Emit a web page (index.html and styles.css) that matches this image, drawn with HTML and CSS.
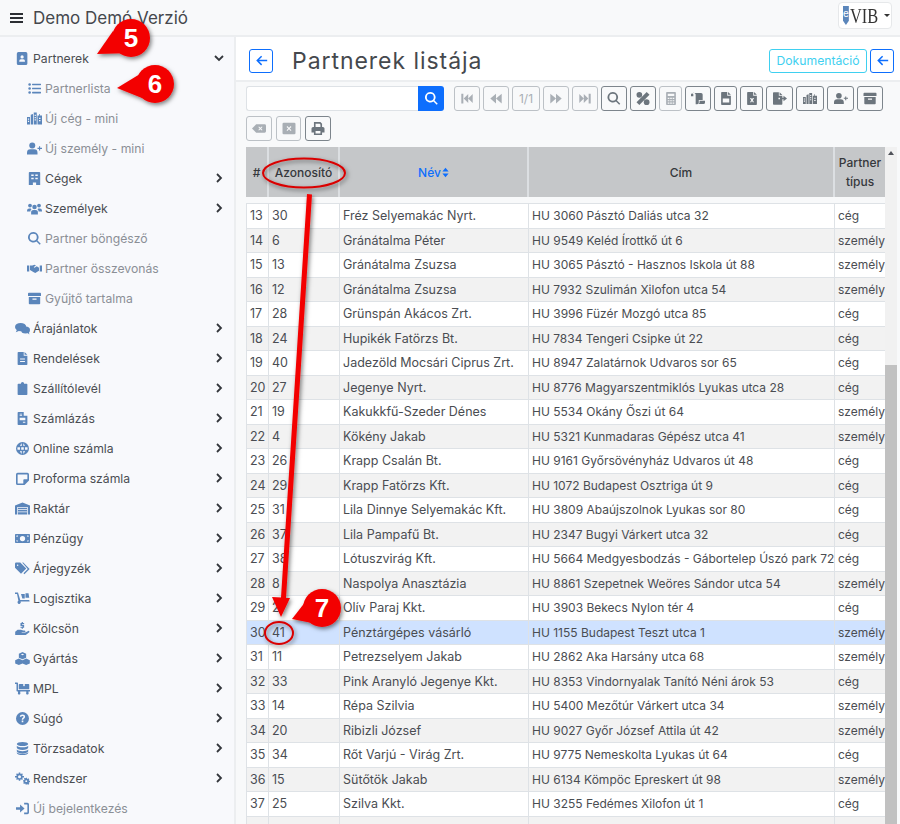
FILE: index.html
```html
<!DOCTYPE html>
<html lang="hu">
<head>
    <meta charset="UTF-8">
    <meta name="viewport" content="width=device-width, initial-scale=1.0">
    <title>Partnerek listája</title>
    <link rel="stylesheet" href="styles.css">
</head>
<body>
    <svg class="icon-defs" width="0" height="0">
        <symbol id="i-addr" viewBox="0 0 16 16"><path fill-rule="evenodd" d="M3 0h9a2 2 0 0 1 2 2v12a2 2 0 0 1-2 2H3a2 2 0 0 1-2-2V2a2 2 0 0 1 2-2zm4.500 4a2 2 0 1 0 0 4 2 2 0 0 0 0-4zM4 12h7V11a2 2 0 0 0-2-2H6a2 2 0 0 0-2 2z"/></symbol>
        <symbol id="i-list" viewBox="0 0 16 16"><circle cx="2" cy="3" r="1.600"/><circle cx="2" cy="8" r="1.600"/><circle cx="2" cy="13" r="1.600"/><rect x="5" y="2" width="11" height="2" rx=".5"/><rect x="5" y="7" width="11" height="2" rx=".5"/><rect x="5" y="12" width="11" height="2" rx=".5"/></symbol>
        <symbol id="i-city" viewBox="0 0 20 16"><path fill-rule="evenodd" d="M0 6h4v10H0zM5 3l3-1v14H5zM9 0h4v16H9zM14 4h2V2h1v2h3v12h-6zM1.200 8v1.500h1.600V8zm0 3v1.500h1.600V11zM10.200 3v1.500h1.600V3zm0 3v1.500h1.600V6zm0 3v1.500h1.600V9zM16 7v1.500h2V7zm0 3v1.500h2V10z"/></symbol>
        <symbol id="i-uplus" viewBox="0 0 20 16"><circle cx="7" cy="4" r="4"/><path d="M0 16v-2.500A4.500 4.500 0 0 1 4.500 9h5a4.500 4.500 0 0 1 4.500 4.500V16zM16 5h1.500v2H20v1.500h-2.500v2H16v-2h-2V7h2z"/></symbol>
        <symbol id="i-bld" viewBox="0 0 14 16"><path fill-rule="evenodd" d="M1 0h12a1 1 0 0 1 1 1v15H9v-3H5v3H0V1a1 1 0 0 1 1-1zm2 3v2h3V3zm5 0v2h3V3zM3 7v2h3V7zm5 0v2h3V7z"/></symbol>
        <symbol id="i-users" viewBox="0 0 20 16"><circle cx="4" cy="4" r="2.500"/><circle cx="16" cy="4" r="2.500"/><circle cx="10" cy="6" r="3"/><path d="M0 11a3 3 0 0 1 3-3h2l1 1a4 4 0 0 0-1.500 3H0zM15 8h2a3 3 0 0 1 3 3v1h-4.500A4 4 0 0 0 14 9zM5.500 14a3.500 3.500 0 0 1 3.500-4h2a3.500 3.500 0 0 1 3.500 4v2h-9z"/></symbol>
        <symbol id="i-search" viewBox="0 0 16 16"><path fill-rule="evenodd" d="M6.500 0a6.500 6.500 0 0 1 5.200 10.400l4 4-1.300 1.300-4-4A6.500 6.500 0 1 1 6.500 0zm0 2.200a4.300 4.300 0 1 0 0 8.600 4.300 4.300 0 0 0 0-8.600z"/></symbol>
        <symbol id="i-hands" viewBox="0 0 20 16"><path d="M0 4h3v8H0zM17 4h3v8h-3zM4 4h3l3-1 2 1-3 2 1 1 3-2 3 2v4l-5 3-2-1-5-3z"/></symbol>
        <symbol id="i-arch" viewBox="0 0 16 16"><path fill-rule="evenodd" d="M1 1h14a1 1 0 0 1 1 1v3H0V2a1 1 0 0 1 1-1zM1 6h14v8a1 1 0 0 1-1 1H2a1 1 0 0 1-1-1zm4.500 2v1.500h5V8z"/></symbol>
        <symbol id="i-comm" viewBox="0 0 20 16"><ellipse cx="7.500" cy="6" rx="7.500" ry="5.500"/><ellipse cx="14" cy="10" rx="6" ry="4.800"/><path d="M3 9l-2 4 5-2zM16 13l3 3-.5-5z"/></symbol>
        <symbol id="i-file" viewBox="0 0 12 16"><path fill-rule="evenodd" d="M1 0h6.500v4.500H12V15a1 1 0 0 1-1 1H1a1 1 0 0 1-1-1V1a1 1 0 0 1 1-1zm7.500 0L12 3.500H8.500zM3 8v1.200h6V8zm0 3v1.200h6V11z"/></symbol>
        <symbol id="i-clip" viewBox="0 0 12 16"><path d="M4 2a2 2 0 0 1 4 0h3a1 1 0 0 1 1 1v12a1 1 0 0 1-1 1H1a1 1 0 0 1-1-1V3a1 1 0 0 1 1-1z"/></symbol>
        <symbol id="i-inv" viewBox="0 0 12 16"><path fill-rule="evenodd" d="M1 0h6.500v4.500H12V15a1 1 0 0 1-1 1H1a1 1 0 0 1-1-1V1a1 1 0 0 1 1-1zm1.500 2v1h3V2zm0 2v1h3V4zm0 3v3h7V7zm4 5v1.300h3V12z"/></symbol>
        <symbol id="i-globe" viewBox="0 0 16 16"><path fill-rule="evenodd" d="M8 0a8 8 0 1 1 0 16A8 8 0 0 1 8 0zM7 1.500C5.800 2.500 5.300 4 5.100 5h2V1.500zm2 0V5h1.900C10.700 4 10.200 2.500 9 1.500zM1.900 6.500A6 6 0 0 0 1.900 9.500H4.900V6.500zm4.500 0v3h3.200v-3zm4.700 0v3h3a6 6 0 0 0 0-3zM5.100 11c.2 1 .7 2.500 1.900 3.500V11zm3.900 0v3.500c1.200-1 1.700-2.500 1.900-3.500z"/></symbol>
        <symbol id="i-note" viewBox="0 0 16 16"><path fill-rule="evenodd" d="M2 1h12a2 2 0 0 1 2 2v7.500L10.500 16H2a2 2 0 0 1-2-2V3a2 2 0 0 1 2-2zm0 2v11h7v-4a1 1 0 0 1 1-1h4V3z"/></symbol>
        <symbol id="i-ware" viewBox="0 0 20 16"><path fill-rule="evenodd" d="M10 0l10 4v12h-3V6H3v10H0V4zM4 7h12v2H4zm0 3h12v2H4zm0 3h12v3H4z"/></symbol>
        <symbol id="i-money" viewBox="0 0 20 16"><path fill-rule="evenodd" d="M1 2h18a1 1 0 0 1 1 1v10a1 1 0 0 1-1 1H1a1 1 0 0 1-1-1V3a1 1 0 0 1 1-1zm9 2.500a3.500 3.500 0 1 0 0 7 3.500 3.500 0 0 0 0-7zM2 4v2a2 2 0 0 0 2-2zm14 0a2 2 0 0 0 2 2V4zM2 10v2h2a2 2 0 0 0-2-2zm16 0a2 2 0 0 0-2 2h2z"/></symbol>
        <symbol id="i-tags" viewBox="0 0 20 16"><path fill-rule="evenodd" d="M0 1.500A1.500 1.500 0 0 1 1.500 0H7l8 8-7 7-8-8zM3.500 2.500a1 1 0 1 0 0 2 1 1 0 0 0 0-2z"/><path d="M9.500 0H11l8.500 8.500-7 7-1.200-1.200L17 8.500z"/></symbol>
        <symbol id="i-dolly" viewBox="0 0 20 16"><path d="M0 0h4l3 10h12l.5 2H7.500a2.200 2.200 0 1 1-3-1L2.700 2H0zM8 2h5v6H9.800zM14 1h4l1 6h-5z"/></symbol>
        <symbol id="i-hand" viewBox="0 0 18 16"><path d="M8 0h1.500v1.200H11v1.300H8.500v.8H11V7H9.500v1.200H8V7H6.500V5.700H9v-.9H6.500V1.200H8zM0 12l3-2.500h4l3 1h1.500a1 1 0 0 1 0 2.200H8v.5h4l4-2.200a1.100 1.100 0 0 1 1.400 1.600L13 16H0z"/></symbol>
        <symbol id="i-cubes" viewBox="0 0 18 16"><path fill-rule="evenodd" d="M9 0l4.500 2v5L9 9 4.500 7V2zM4.500 8L9 10v4l-4.500 2L0 14v-4zM13.500 8L18 10v4l-4.500 2L9 14v-4zM9 2L7 3l2 1 2-1z"/></symbol>
        <symbol id="i-flat" viewBox="0 0 20 16"><path d="M0 0h3a1 1 0 0 1 1 1v9h16v2h-2v1.500a1.700 1.700 0 1 1-3 0V12H7v1.500a1.700 1.700 0 1 1-3 0V12H3a1 1 0 0 1-1-1V2H0zM6 2h5v3l1-.5 1 .5V2h5a1 1 0 0 1 1 1v6H5V3a1 1 0 0 1 1-1z"/></symbol>
        <symbol id="i-quest" viewBox="0 0 16 16"><path fill-rule="evenodd" d="M8 0a8 8 0 1 1 0 16A8 8 0 0 1 8 0zm0 3.200c-2 0-3 1-3.300 2.300l1.600.6C6.600 5.300 7 4.900 8 4.900c.8 0 1.300.4 1.300 1 0 1.100-2.200 1.200-2.200 3.300v.4h1.800v-.3c0-1.200 2.300-1.500 2.300-3.500 0-1.500-1.300-2.600-3.200-2.600zM7 10.500v2h2v-2z"/></symbol>
        <symbol id="i-db" viewBox="0 0 14 16"><ellipse cx="7" cy="2.500" rx="7" ry="2.500"/><path d="M0 4.500C1 6 4 6.500 7 6.500s6-.5 7-2V7c0 1.500-3 2.700-7 2.700S0 8.500 0 7zM0 9.300c1 1.500 4 2 7 2s6-.5 7-2v2.200c0 1.500-3 2.500-7 2.500s-7-1-7-2.500zM0 12.500c1 1.500 4 2 7 2s6-.5 7-2v1c0 1.500-3 2.500-7 2.500s-7-1-7-2.500z"/></symbol>
        <symbol id="i-cogs" viewBox="0 0 20 16"><path fill-rule="evenodd" d="M5 0h2v1.300l1.300.6 1-1 1.300 1.300-1 1 .6 1.300H12v2h-1.800l-.6 1.300 1 1-1.300 1.300-1-1L7 9.700V11H5V9.700l-1.300-.6-1 1L1.400 8.800l1-1L1.800 6.500H0v-2h1.800l.6-1.300-1-1L2.700.9l1 1L5 1.300zm1 3.500a2 2 0 1 0 0 4 2 2 0 0 0 0-4zM14 7h2v1l1 .5.900-.7 1.200 1.200-.7.900.4 1.100H20v2h-1.200l-.4 1.100.7.900-1.200 1.200-.9-.7-1 .5V16h-2v-.9l-1-.5-.9.7-1.200-1.200.7-.9-.4-1.200H11v-2h1.200l.4-1 -.7-.9 1.200-1.200.9.7 1-.5zm1 3.200a1.300 1.300 0 1 0 0 2.600 1.300 1.300 0 0 0 0-2.600z"/></symbol>
        <symbol id="i-signin" viewBox="0 0 16 16"><path d="M0 6.500h5V3l5.500 5L5 13V9.500H0zM10 1h4a2 2 0 0 1 2 2v10a2 2 0 0 1-2 2h-4v-2h3.500a.5.500 0 0 0 .5-.5v-9a.5.500 0 0 0-.5-.5H10z"/></symbol>
        <symbol id="i-first" viewBox="0 0 16 16"><path d="M1 2h2.500v12H1zM4 8l5.500-5.500V8l5.500-5.500v11L9.500 8v5.500z"/></symbol>
        <symbol id="i-back" viewBox="0 0 16 16"><path d="M1 8l7-6v6l7-6v12L8 8v6z"/></symbol>
        <symbol id="i-fwd" viewBox="0 0 16 16"><path d="M15 8L8 2v6L1 2v12l7-6v6z"/></symbol>
        <symbol id="i-last" viewBox="0 0 16 16"><path d="M15 2h-2.500v12H15zM12 8L6.500 2.500V8L1 2.500v11L6.500 8v5.500z"/></symbol>
        <symbol id="i-pct" viewBox="0 0 16 16"><path d="M12.500 0L16 3.500 3.500 16 0 12.500z"/><circle cx="3.500" cy="3.500" r="3.500"/><circle cx="12.500" cy="12.500" r="3.500"/></symbol>
        <symbol id="i-calc" viewBox="0 0 12 16"><path fill-rule="evenodd" d="M1 0h10a1 1 0 0 1 1 1v14a1 1 0 0 1-1 1H1a1 1 0 0 1-1-1V1a1 1 0 0 1 1-1zm1 2v3h8V2zm0 5v1.500h2V7zm3 0v1.500h2V7zm3 0v1.500h2V7zM2 10v1.500h2V10zm3 0v1.500h2V10zm3 0v1.500h2V10zM2 13v1.500h2V13zm3 0v1.500h2V13zm3 0v1.500h2V13z"/></symbol>
        <symbol id="i-scroll" viewBox="0 0 18 16"><path d="M2.500 1H13a2 2 0 0 1 2 2v7h-5v3a2.500 2.500 0 0 1-2 2.500H6V3.500A2.500 2.500 0 0 0 2.500 1zM0 3a1.500 1.500 0 0 1 3 0v2H0zM11 11h7v2a2 2 0 0 1-2 2H9.500A3 3 0 0 0 11 13z"/></symbol>
        <symbol id="i-csv" viewBox="0 0 12 16"><path fill-rule="evenodd" d="M1 0h6.500v4.500H12V15a1 1 0 0 1-1 1H1a1 1 0 0 1-1-1V1a1 1 0 0 1 1-1zm7.500 0L12 3.500H8.500zM2 8v5h8V8z"/></symbol>
        <symbol id="i-xls" viewBox="0 0 12 16"><path fill-rule="evenodd" d="M1 0h6.500v4.500H12V15a1 1 0 0 1-1 1H1a1 1 0 0 1-1-1V1a1 1 0 0 1 1-1zm7.500 0L12 3.500H8.500zM3.500 7.500L5 10l-1.500 2.500h1.600L6 11l.9 1.500h1.600L7 10l1.500-2.500H6.900L6 9l-.9-1.500z"/></symbol>
        <symbol id="i-exp" viewBox="0 0 18 16"><path d="M1 0h6.500v4.500H12V7H7v2h5v6a1 1 0 0 1-1 1H1a1 1 0 0 1-1-1V1a1 1 0 0 1 1-1zM8.500 0L12 3.500H8.500zM13.500 4.500L18 8l-4.500 3.500V9H9V7h4.500z"/></symbol>
        <symbol id="i-bksp" viewBox="0 0 20 16"><path fill-rule="evenodd" d="M6 2h12a2 2 0 0 1 2 2v8a2 2 0 0 1-2 2H6L0 8zm4 3L9 6l2 2-2 2 1 1 2-2 2 2 1-1-2-2 2-2-1-1-2 2z"/></symbol>
        <symbol id="i-wclose" viewBox="0 0 16 16"><path fill-rule="evenodd" d="M1.500 1h13A1.500 1.500 0 0 1 16 2.500v11a1.500 1.500 0 0 1-1.500 1.500h-13A1.500 1.500 0 0 1 0 13.500v-11A1.500 1.500 0 0 1 1.500 1zM6 5L5 6l2 2-2 2 1 1 2-2 2 2 1-1-2-2 2-2-1-1-2 2z"/></symbol>
        <symbol id="i-print" viewBox="0 0 16 16"><path fill-rule="evenodd" d="M3 0h8l2 2v4h1a2 2 0 0 1 2 2v5h-3v3H3v-3H0V8a2 2 0 0 1 2-2h1zm2 2v4h6V3l-1-1zm0 9v3h6v-3z"/></symbol>
        <symbol id="i-left" viewBox="0 0 16 16"><path d="M7.500 2l1.300 1.300L5 7h10v2H5l3.800 3.700L7.500 14 1.500 8z"/></symbol>
        <symbol id="i-sort" viewBox="0 0 10 16"><path d="M5 1l4.500 5.500h-9zM5 15L.5 9.500h9z"/></symbol>
    </svg>

    <header class="topbar">
        <div class="burger"><span></span><span></span><span></span></div>
        <div class="brand">Demo Demó Verzió</div>
        <div class="logo-btn">
            <span class="logo-e">e</span>
            <span class="logo-vib">VIB</span>
            <span class="caret"></span>
        </div>
    </header>

    <div class="layout">
        <nav class="sidebar">
            <a class="nav-item"><svg class="ico"><use href="#i-addr"/></svg><span>Partnerek</span><svg class="chev" viewBox="0 0 12 12"><path d="M2 4l4 4 4-4"/></svg></a>
            <a class="nav-item sub leaf"><svg class="ico"><use href="#i-list"/></svg><span>Partnerlista</span></a>
            <a class="nav-item sub leaf"><svg class="ico"><use href="#i-city"/></svg><span>Új cég - mini</span></a>
            <a class="nav-item sub leaf"><svg class="ico"><use href="#i-uplus"/></svg><span>Új személy - mini</span></a>
            <a class="nav-item sub"><svg class="ico"><use href="#i-bld"/></svg><span>Cégek</span><svg class="chev" viewBox="0 0 12 12"><path d="M4 2l4 4-4 4"/></svg></a>
            <a class="nav-item sub"><svg class="ico"><use href="#i-users"/></svg><span>Személyek</span><svg class="chev" viewBox="0 0 12 12"><path d="M4 2l4 4-4 4"/></svg></a>
            <a class="nav-item sub leaf"><svg class="ico"><use href="#i-search"/></svg><span>Partner böngésző</span></a>
            <a class="nav-item sub leaf"><svg class="ico"><use href="#i-hands"/></svg><span>Partner összevonás</span></a>
            <a class="nav-item sub leaf"><svg class="ico"><use href="#i-arch"/></svg><span>Gyűjtő tartalma</span></a>
            <a class="nav-item"><svg class="ico"><use href="#i-comm"/></svg><span>Árajánlatok</span><svg class="chev" viewBox="0 0 12 12"><path d="M4 2l4 4-4 4"/></svg></a>
            <a class="nav-item"><svg class="ico"><use href="#i-file"/></svg><span>Rendelések</span><svg class="chev" viewBox="0 0 12 12"><path d="M4 2l4 4-4 4"/></svg></a>
            <a class="nav-item"><svg class="ico"><use href="#i-clip"/></svg><span>Szállítólevél</span><svg class="chev" viewBox="0 0 12 12"><path d="M4 2l4 4-4 4"/></svg></a>
            <a class="nav-item"><svg class="ico"><use href="#i-inv"/></svg><span>Számlázás</span><svg class="chev" viewBox="0 0 12 12"><path d="M4 2l4 4-4 4"/></svg></a>
            <a class="nav-item"><svg class="ico"><use href="#i-globe"/></svg><span>Online számla</span><svg class="chev" viewBox="0 0 12 12"><path d="M4 2l4 4-4 4"/></svg></a>
            <a class="nav-item"><svg class="ico"><use href="#i-note"/></svg><span>Proforma számla</span><svg class="chev" viewBox="0 0 12 12"><path d="M4 2l4 4-4 4"/></svg></a>
            <a class="nav-item"><svg class="ico"><use href="#i-ware"/></svg><span>Raktár</span><svg class="chev" viewBox="0 0 12 12"><path d="M4 2l4 4-4 4"/></svg></a>
            <a class="nav-item"><svg class="ico"><use href="#i-money"/></svg><span>Pénzügy</span><svg class="chev" viewBox="0 0 12 12"><path d="M4 2l4 4-4 4"/></svg></a>
            <a class="nav-item"><svg class="ico"><use href="#i-tags"/></svg><span>Árjegyzék</span><svg class="chev" viewBox="0 0 12 12"><path d="M4 2l4 4-4 4"/></svg></a>
            <a class="nav-item"><svg class="ico"><use href="#i-dolly"/></svg><span>Logisztika</span><svg class="chev" viewBox="0 0 12 12"><path d="M4 2l4 4-4 4"/></svg></a>
            <a class="nav-item"><svg class="ico"><use href="#i-hand"/></svg><span>Kölcsön</span><svg class="chev" viewBox="0 0 12 12"><path d="M4 2l4 4-4 4"/></svg></a>
            <a class="nav-item"><svg class="ico"><use href="#i-cubes"/></svg><span>Gyártás</span><svg class="chev" viewBox="0 0 12 12"><path d="M4 2l4 4-4 4"/></svg></a>
            <a class="nav-item"><svg class="ico"><use href="#i-flat"/></svg><span>MPL</span><svg class="chev" viewBox="0 0 12 12"><path d="M4 2l4 4-4 4"/></svg></a>
            <a class="nav-item"><svg class="ico"><use href="#i-quest"/></svg><span>Súgó</span><svg class="chev" viewBox="0 0 12 12"><path d="M4 2l4 4-4 4"/></svg></a>
            <a class="nav-item"><svg class="ico"><use href="#i-db"/></svg><span>Törzsadatok</span><svg class="chev" viewBox="0 0 12 12"><path d="M4 2l4 4-4 4"/></svg></a>
            <a class="nav-item"><svg class="ico"><use href="#i-cogs"/></svg><span>Rendszer</span><svg class="chev" viewBox="0 0 12 12"><path d="M4 2l4 4-4 4"/></svg></a>
            <a class="nav-item leaf"><svg class="ico"><use href="#i-signin"/></svg><span>Új bejelentkezés</span></a>
        </nav>

        <main class="content">
            <div class="title-bar">
                <button class="btn-blue"><svg class="btn-ico"><use href="#i-left"/></svg></button>
                <h1 class="page-title">Partnerek listája</h1>
                <button class="btn-doc">Dokumentáció</button>
                <button class="btn-blue"><svg class="btn-ico"><use href="#i-left"/></svg></button>
            </div>

            <div class="toolbar">
                <div class="search-group">
                    <input class="search-input" type="text">
                    <button class="search-btn"><svg class="btn-ico"><use href="#i-search"/></svg></button>
                </div>
                <button class="tool off ml10 w26"><svg><use href="#i-first"/></svg></button>
                <button class="tool off w26"><svg><use href="#i-back"/></svg></button>
                <button class="tool off w28 pager">1/1</button>
                <button class="tool off w26"><svg><use href="#i-fwd"/></svg></button>
                <button class="tool off w26"><svg><use href="#i-last"/></svg></button>
                <button class="tool w26"><svg><use href="#i-search"/></svg></button>
                <button class="tool w26"><svg><use href="#i-pct"/></svg></button>
                <button class="tool off w23"><svg><use href="#i-calc"/></svg></button>
                <button class="tool w26"><svg><use href="#i-scroll"/></svg></button>
                <button class="tool w23"><svg><use href="#i-csv"/></svg></button>
                <button class="tool w23"><svg><use href="#i-xls"/></svg></button>
                <button class="tool w27"><svg><use href="#i-exp"/></svg></button>
                <button class="tool w28"><svg><use href="#i-city"/></svg></button>
                <button class="tool w27"><svg><use href="#i-uplus"/></svg></button>
                <button class="tool w26"><svg><use href="#i-arch"/></svg></button>
            </div>
            <div class="toolbar second">
                <button class="tool off w26"><svg><use href="#i-bksp"/></svg></button>
                <button class="tool off w25"><svg><use href="#i-wclose"/></svg></button>
                <button class="tool w26"><svg><use href="#i-print"/></svg></button>
            </div>

            <div class="table-wrap">
                <div class="table-pane">
                    <table class="grid head">
                        <colgroup><col class="c1"><col class="c2"><col class="c3"><col class="c4"><col class="c5"></colgroup>
                        <tr>
                            <th>#</th>
                            <th>Azonosító</th>
                            <th class="sorted">Név<svg class="sort"><use href="#i-sort"/></svg></th>
                            <th>Cím</th>
                            <th>Partner típus</th>
                        </tr>
                    </table>
                    <table class="grid body">
                        <colgroup><col class="c1"><col class="c2"><col class="c3"><col class="c4"><col class="c5"></colgroup>
                        <tr><td>13</td><td>30</td><td>Fréz Selyemakác Nyrt.</td><td>HU 3060 Pásztó Daliás utca 32</td><td>cég</td></tr>
                        <tr><td>14</td><td>6</td><td>Gránátalma Péter</td><td>HU 9549 Keléd Írottkő út 6</td><td>személy</td></tr>
                        <tr><td>15</td><td>13</td><td>Gránátalma Zsuzsa</td><td>HU 3065 Pásztó - Hasznos Iskola út 88</td><td>személy</td></tr>
                        <tr><td>16</td><td>12</td><td>Gránátalma Zsuzsa</td><td>HU 7932 Szulimán Xilofon utca 54</td><td>személy</td></tr>
                        <tr><td>17</td><td>28</td><td>Grünspán Akácos Zrt.</td><td>HU 3996 Füzér Mozgó utca 85</td><td>cég</td></tr>
                        <tr><td>18</td><td>24</td><td>Hupikék Fatörzs Bt.</td><td>HU 7834 Tengeri Csipke út 22</td><td>cég</td></tr>
                        <tr><td>19</td><td>40</td><td>Jadezöld Mocsári Ciprus Zrt.</td><td>HU 8947 Zalatárnok Udvaros sor 65</td><td>cég</td></tr>
                        <tr><td>20</td><td>27</td><td>Jegenye Nyrt.</td><td>HU 8776 Magyarszentmiklós Lyukas utca 28</td><td>cég</td></tr>
                        <tr><td>21</td><td>19</td><td>Kakukkfű-Szeder Dénes</td><td>HU 5534 Okány Őszi út 64</td><td>személy</td></tr>
                        <tr><td>22</td><td>4</td><td>Kökény Jakab</td><td>HU 5321 Kunmadaras Gépész utca 41</td><td>személy</td></tr>
                        <tr><td>23</td><td>26</td><td>Krapp Csalán Bt.</td><td>HU 9161 Győrsövényház Udvaros út 48</td><td>cég</td></tr>
                        <tr><td>24</td><td>29</td><td>Krapp Fatörzs Kft.</td><td>HU 1072 Budapest Osztriga út 9</td><td>cég</td></tr>
                        <tr><td>25</td><td>31</td><td>Lila Dinnye Selyemakác Kft.</td><td>HU 3809 Abaújszolnok Lyukas sor 80</td><td>cég</td></tr>
                        <tr><td>26</td><td>37</td><td>Lila Pampafű Bt.</td><td>HU 2347 Bugyi Várkert utca 32</td><td>cég</td></tr>
                        <tr><td>27</td><td>38</td><td>Lótuszvirág Kft.</td><td>HU 5664 Medgyesbodzás - Gábortelep Úszó park 72</td><td>cég</td></tr>
                        <tr><td>28</td><td>8</td><td>Naspolya Anasztázia</td><td>HU 8861 Szepetnek Weöres Sándor utca 54</td><td>személy</td></tr>
                        <tr><td>29</td><td>2</td><td>Olív Paraj Kkt.</td><td>HU 3903 Bekecs Nylon tér 4</td><td>cég</td></tr>
                        <tr class="picked"><td>30</td><td>41</td><td>Pénztárgépes vásárló</td><td>HU 1155 Budapest Teszt utca 1</td><td>személy</td></tr>
                        <tr><td>31</td><td>11</td><td>Petrezselyem Jakab</td><td>HU 2862 Aka Harsány utca 68</td><td>személy</td></tr>
                        <tr><td>32</td><td>33</td><td>Pink Aranyló Jegenye Kkt.</td><td>HU 8353 Vindornyalak Tanító Néni árok 53</td><td>cég</td></tr>
                        <tr><td>33</td><td>14</td><td>Répa Szilvia</td><td>HU 5400 Mezőtúr Várkert utca 34</td><td>személy</td></tr>
                        <tr><td>34</td><td>20</td><td>Ribizli József</td><td>HU 9027 Győr József Attila út 42</td><td>személy</td></tr>
                        <tr><td>35</td><td>34</td><td>Rőt Varjú - Virág Zrt.</td><td>HU 9775 Nemeskolta Lyukas út 64</td><td>cég</td></tr>
                        <tr><td>36</td><td>15</td><td>Sütőtök Jakab</td><td>HU 6134 Kömpöc Epreskert út 98</td><td>személy</td></tr>
                        <tr><td>37</td><td>25</td><td>Szilva Kkt.</td><td>HU 3255 Fedémes Xilofon út 1</td><td>cég</td></tr>
                        <tr><td>&nbsp;</td><td></td><td></td><td></td><td></td></tr>
                    </table>
                </div>
                <div class="scrollbar">
                    <span class="scroll-up"></span>
                    <div class="scroll-thumb"></div>
                </div>
            </div>
        </main>
    </div>

    <!-- red annotations drawn on top of the screenshot -->
    <svg class="marks" width="900" height="824" viewBox="0 0 900 824">
        <defs>
            <filter id="drop" x="-30%" y="-30%" width="160%" height="160%">
                <feDropShadow dx="1.500" dy="2" stdDeviation="2" flood-color="#000" flood-opacity=".5"/>
            </filter>
        </defs>
        <g filter="url(#drop)" fill="#f30000">
            <path d="M113 31L97 54 131 53Z"/><circle cx="131" cy="38" r="19"/>
            <path d="M140 74L117 88 147 100Z"/><circle cx="155" cy="84" r="19"/>
            <path d="M306 601L292 619 327 626Z"/><circle cx="322" cy="608" r="19"/>
        </g>
        <g filter="url(#drop)" fill="none" stroke="#d90000" stroke-width="2">
            <ellipse cx="304" cy="173" rx="41" ry="14.500"/>
            <ellipse cx="279" cy="633" rx="14" ry="11"/>
        </g>
        <g filter="url(#drop)" fill="#f30000">
            <path d="M307 194L312 194.500 286 598 290 598 281 617 272 597 281 597.500Z"/>
        </g>
        <g class="mark-num">
            <text x="131" y="47">5</text>
            <text x="155" y="93">6</text>
            <text x="322" y="617">7</text>
        </g>
    </svg>
</body>
</html>
```

FILE: styles.css
```css
:root {
    --icon-color: #5b86bb;
    --text-color: #4a4d52;
    --muted-color: #8b8f96;
    --border-color: #dee2e6;
    --primary-color: #0d6efd;
}

* {
    box-sizing: border-box;
}

html,
body {
    height: 100%;
}

body {
    margin: 0;
    overflow: hidden;
    position: relative;
    font-family: Inter, "Open Sans", sans-serif;
    font-size: 12.2px;
    color: var(--text-color);
    background-color: #f8f9fa;
}

.icon-defs {
    position: absolute;
}

/* Top bar */
.topbar {
    height: 37px;
    display: flex;
    align-items: center;
    padding: 0 8px 0 10px;
    border-bottom: 2px solid #eceef0;
    background-color: #f8f9fa;
}

.burger {
    width: 13px;
    display: flex;
    flex-direction: column;
    gap: 2px;
}

.burger span {
    height: 2px;
    background-color: #2b2e33;
}

.brand {
    margin-left: 10px;
    font-size: 17px;
    color: #45484d;
}

.logo-btn {
    margin-left: auto;
    width: 54px;
    height: 27px;
    margin-top: -4px;
    display: flex;
    align-items: center;
    padding-left: 4px;
    background-color: #fff;
    border: 1px solid #e6e8ea;
    border-radius: 4px;
}

.logo-e {
    width: 11px;
    height: 19px;
    color: #fff;
    font-size: 10px;
    line-height: 14px;
    text-align: center;
    background-color: #5b86bb;
    clip-path: polygon(0 0, 100% 0, 100% 78%, 50% 100%, 0 78%);
}

.logo-vib {
    margin-left: 1px;
    font-family: "Liberation Serif", serif;
    font-size: 20px;
    line-height: 18px;
    color: #333;
    transform: scaleX(.82);
    transform-origin: left center;
}

.caret {
    margin-left: auto;
    margin-right: 3px;
    border-top: 3px solid #333;
    border-left: 3px solid transparent;
    border-right: 3px solid transparent;
}

.layout {
    display: flex;
    height: 787px;
}

/* Sidebar */
.sidebar {
    width: 236px;
    flex-shrink: 0;
    padding-top: 6px;
    overflow: hidden;
    background-color: #f8f9fc;
    border-right: 2px solid #eceef0;
}

.nav-item {
    height: 30px;
    display: flex;
    align-items: center;
    padding: 0 9px 0 15px;
    color: var(--text-color);
}

.nav-item .ico {
    width: 15px;
    height: 13px;
    margin-right: 3px;
    fill: var(--icon-color);
    flex-shrink: 0;
}

.nav-item.sub {
    padding-left: 27px;
}

.nav-item.leaf {
    color: var(--muted-color);
}

.chev {
    width: 12px;
    height: 12px;
    margin-left: auto;
    fill: none;
    stroke: #33363b;
    stroke-width: 1.800;
}

/* Main */
.content {
    flex: 1;
    min-width: 0;
    overflow: hidden;
}

.title-bar {
    height: 45px;
    display: flex;
    align-items: center;
    gap: 3px;
    padding: 4px 6px 0 13px;
    background-color: #fff;
    border-bottom: 2px solid #eceef0;
}

.page-title {
    margin: 0 auto 0 16px;
    font-size: 23px;
    font-weight: 400;
    letter-spacing: .95px;
    color: #45484d;
}

.btn-blue {
    width: 24px;
    height: 24px;
    padding: 0;
    display: flex;
    align-items: center;
    justify-content: center;
    color: var(--primary-color);
    background-color: #fff;
    border: 1px solid var(--primary-color);
    border-radius: 3px;
}

.btn-ico {
    width: 13px;
    height: 13px;
    fill: currentColor;
}

.btn-doc {
    width: 98px;
    height: 24px;
    padding: 0;
    font-family: inherit;
    font-size: 12.2px;
    color: #3fd0f0;
    background-color: #fff;
    border: 1px solid #3fd0f0;
    border-radius: 3px;
}

.toolbar {
    display: flex;
    gap: 3px;
    padding: 4px 0 0 10px;
}

.toolbar.second {
    padding-top: 5px;
    gap: 4px;
}

.search-group {
    display: flex;
    width: 198px;
    height: 25px;
}

.search-input {
    flex: 1;
    min-width: 0;
    background-color: #fff;
    border: 1px solid var(--border-color);
    border-right: none;
    border-radius: 3px 0 0 3px;
}

.search-btn {
    width: 26px;
    padding: 0;
    display: flex;
    align-items: center;
    justify-content: center;
    color: #fff;
    background-color: var(--primary-color);
    border: none;
    border-radius: 0 3px 3px 0;
}

.tool {
    height: 25px;
    padding: 0;
    display: flex;
    align-items: center;
    justify-content: center;
    font-family: inherit;
    font-size: 12px;
    color: #6c757d;
    background-color: #f8f9fa;
    border: 1px solid #7d858c;
    border-radius: 3px;
    flex-shrink: 0;
}

.tool svg {
    width: 14px;
    height: 13px;
    fill: currentColor;
}

.tool.off {
    color: #a9afb5;
    border-color: #bcc1c6;
}

.ml10 {
    margin-left: 7px;
}

.w23 { width: 23px; }
.w25 { width: 25px; }
.w26 { width: 26px; }
.w27 { width: 27px; }
.w28 { width: 28px; }

/* Table */
.table-wrap {
    display: flex;
    margin: 6px 3px 0 10px;
    height: 678px;
    overflow: hidden;
}

.table-pane {
    width: 639px;
    overflow: hidden;
}

.grid {
    width: 639px;
    table-layout: fixed;
    border-collapse: collapse;
}

.c1 { width: 22px; }
.c2 { width: 71px; }
.c3 { width: 189px; }
.c4 { width: 306px; }
.c5 { width: 51px; }

.grid.head {
    height: 50px;
    margin-bottom: 6px;
}

.grid th {
    padding: 0;
    font-size: 12px;
    font-weight: 500;
    color: #35383c;
    overflow: hidden;
    background-color: #c5c7c9;
    border: 1px solid #dcdfe2;
    border-width: 0 2px 0 0;
}

.grid th:last-child {
    border-right: none;
    line-height: 19px;
}

.grid th.sorted {
    color: var(--primary-color);
}

.sort {
    width: 7px;
    height: 11px;
    margin-left: 1px;
    vertical-align: -1px;
    fill: var(--primary-color);
}

.grid.body {
    border-top: 1px solid var(--border-color);
}

.grid td {
    height: 24.500px;
    padding: 0 3px;
    font-size: 12.5px;
    white-space: nowrap;
    overflow: hidden;
    border: 1px solid var(--border-color);
    border-top: none;
    background-color: #fff;
}

.grid td:nth-child(4) {
    font-size: 12px;
}

.grid td:last-child {
    font-size: 12px;
    border-right: none;
}

.grid tr:nth-child(even) td {
    background-color: #f2f2f2;
}

.grid tr.picked td {
    background-color: #cfe2ff;
}

.scrollbar {
    width: 12px;
    position: relative;
    background-color: #f1f1f1;
}

.scroll-up {
    position: absolute;
    top: 4px;
    left: 3px;
    border-bottom: 4px solid #50535a;
    border-left: 3px solid transparent;
    border-right: 3px solid transparent;
}

.scroll-thumb {
    margin-top: 218px;
    height: 460px;
    background-color: #c1c1c1;
}

/* Annotation layer */
.marks {
    position: absolute;
    top: 0;
    left: 0;
}

.mark-num text {
    font-family: "Liberation Sans", sans-serif;
    font-size: 26px;
    font-weight: 700;
    text-anchor: middle;
    fill: #fff;
}
```
